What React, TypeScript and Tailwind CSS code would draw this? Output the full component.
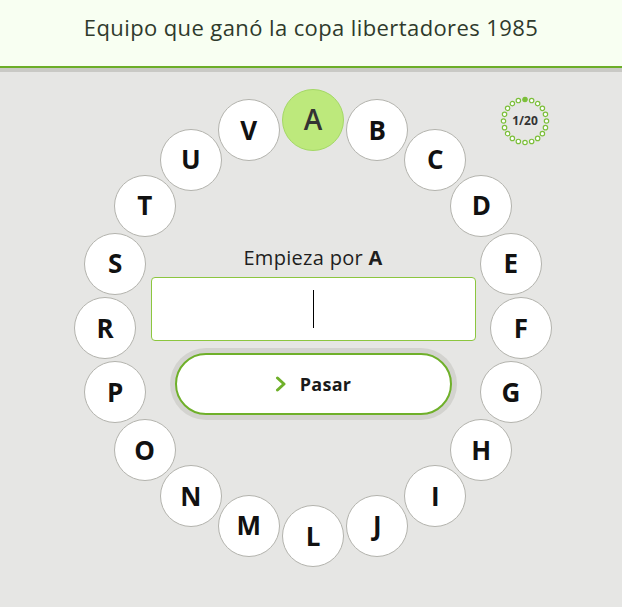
const LETTERS = ["A", "B", "C", "D", "E", "F", "G", "H", "I", "J", "L", "M", "N", "O", "P", "R", "S", "T", "U", "V"];

const CX = 313;
const CY = 256;
const R = 208;
const D = 62;

function Timer() {
  const dots = Array.from({ length: 20 }, (_, i) => {
    const a = (i / 20) * Math.PI * 2;
    return { x: 26 + 21.5 * Math.sin(a), y: 26 - 21.5 * Math.cos(a), on: i === 0 };
  });
  return (
    <div className="absolute left-[499px] top-[23px] w-[52px] h-[52px]">
      <svg width="52" height="52" viewBox="0 0 52 52" className="absolute inset-0">
        {dots.map((d, i) => (
          <circle key={i} cx={d.x} cy={d.y} r="2.2" fill={d.on ? "#7cbf3a" : "#ffffff"} stroke="#7cbf3a" strokeWidth="1.2" />
        ))}
      </svg>
      <div className="absolute inset-0 flex items-center justify-center text-[12px] font-bold text-[#333]">1/20</div>
    </div>
  );
}

export default function App() {
  return (
    <div className="w-[622px] h-[607px] bg-[#e6e6e4] overflow-hidden" style={{ fontFamily: '"Open Sans", "Liberation Sans", sans-serif' }}>
      <header className="h-[68px] bg-[#f8fff2] border-b-2 border-[#6cae28] flex items-center justify-center">
        <h1 className="text-[22px] text-[#2f3a2c] tracking-[0.4px] mt-[-12px]">Equipo que ganó la copa libertadores 1985</h1>
      </header>
      <div className="h-[4px] bg-[#c9c9c5]" />

      <main className="relative h-[533px]">
        <Timer />

        {LETTERS.map((l, i) => {
          const a = (i / 20) * Math.PI * 2;
          const x = CX + R * Math.sin(a) - D / 2;
          const y = CY - R * Math.cos(a) - D / 2;
          const active = i === 0;
          return (
            <div
              key={l}
              className={
                active
                  ? "absolute w-[62px] h-[62px] rounded-full bg-[#bde97c] border border-[#a4d866] flex items-center justify-center text-[28px] font-semibold text-[#333] pb-[3px]"
                  : "absolute w-[62px] h-[62px] rounded-full bg-white border border-[#b3b3ad] flex items-center justify-center text-[26px] font-bold text-[#111]"
              }
              style={{ left: x, top: y }}
            >
              {l}
            </div>
          );
        })}

        <div className="flex flex-col items-center pt-[173px] pl-[4px]">
          <p className="text-[20px] leading-[25px] tracking-[0.3px] text-[#1e1e1e]">
            Empieza por <span className="font-bold">A</span>
          </p>
          <div className="mt-[7px] w-[325px] h-[64px] bg-white border border-[#8cc63f] rounded-[4px] flex items-center justify-center">
            <div className="w-[1px] h-[38px] bg-black" />
          </div>
          <button className="mt-[12px] w-[277px] h-[62px] rounded-full bg-white border-2 border-[#6fb02a] shadow-[0_0_0_5px_#d3d3cf] flex items-center justify-center gap-[13px]">
            <svg width="12" height="16" viewBox="0 0 12 16">
              <path d="M2.5 2 L9 8 L2.5 14" fill="none" stroke="#6fb02a" strokeWidth="3" strokeLinecap="round" strokeLinejoin="round" />
            </svg>
            <span className="text-[18px] font-bold tracking-[0.3px] text-[#1a1a1a]">Pasar</span>
          </button>
        </div>
      </main>
    </div>
  );
}
